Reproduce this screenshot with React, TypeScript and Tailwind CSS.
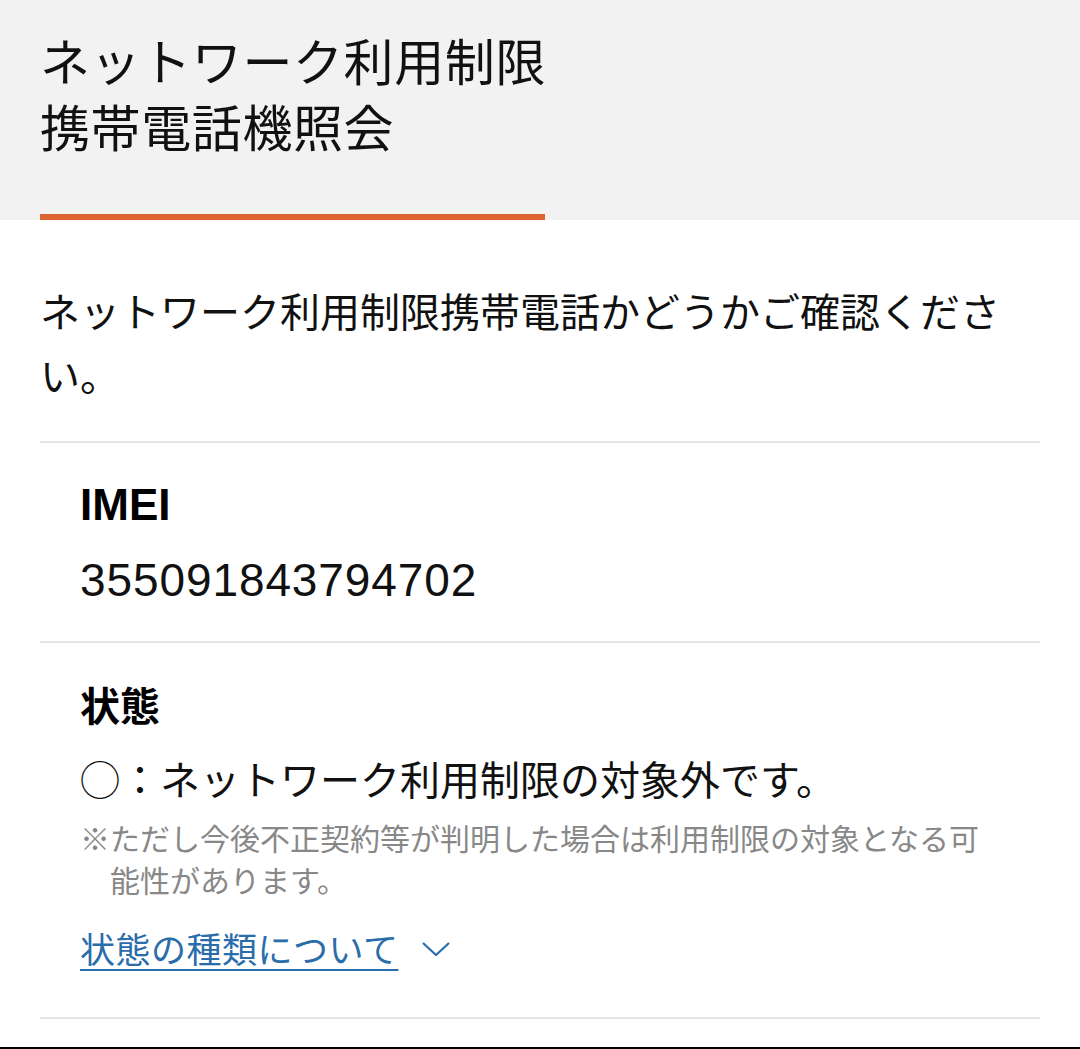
import React from "react";

const jp = { fontFamily: '"Noto Sans CJK JP", "Noto Sans", sans-serif' };

export default function App() {
  return (
    <div className="w-[1080px] h-[1049px] bg-white text-black overflow-hidden flex flex-col" style={jp}>
      <header className="bg-[#f2f2f2] px-[40px] pt-[26px] flex flex-col">
        <h1 className="text-[50px] leading-[66px] font-normal text-[#111] tracking-[0.6px]">
          ネットワーク利用制限
          <br />
          携帯電話機照会
        </h1>
        <div className="mt-[56px] h-[6px] w-[505px] bg-[#dd6330]" />
      </header>

      <main className="px-[40px] flex flex-col">
        <p className="mt-[58px] text-[40px] leading-[64px] text-[#111]">
          ネットワーク利用制限携帯電話かどうかご確認ください。
        </p>
        <div className="mt-[35px] h-[2px] bg-[#e6e6e6]" />

        <section className="px-[40px] pt-[32px] pb-[31px] flex flex-col gap-[15px]">
          <div
            className="text-[44px] leading-[60px] font-bold"
            style={{ fontFamily: '"Liberation Sans", Arial, sans-serif' }}
          >
            IMEI
          </div>
          <div
            className="text-[46px] leading-[60px] text-[#111] tracking-[0.9px]"
            style={{ fontFamily: '"Liberation Sans", Arial, sans-serif' }}
          >
            355091843794702
          </div>
        </section>
        <div className="h-[2px] bg-[#e6e6e6]" />

        <section className="px-[40px] pt-[33px] flex flex-col">
          <div className="text-[40px] leading-[56px] font-bold">状態</div>
          <div className="mt-[18px] text-[40px] leading-[56px] text-[#111]">◯：ネットワーク利用制限の対象外です。</div>
          <p className="mt-[10px] text-[30px] leading-[42px] text-[#888] pl-[1em] [text-indent:-1em]">
            ※ただし今後不正契約等が判明した場合は利用制限の対象となる可能性があります。
          </p>
          <div className="mt-[23px] flex items-center gap-[24px]">
            <a className="text-[35px] leading-[50px] text-[#2a6dab] underline decoration-[2px] underline-offset-[6px] tracking-[0.5px]">
              状態の種類について
            </a>
            <svg width="28" height="14" viewBox="0 0 28 14" className="mt-[2px]">
              <path d="M1 1 L14 13 L27 1" fill="none" stroke="#2a6dab" strokeWidth="2.2" />
            </svg>
          </div>
        </section>
        <div className="mt-[44px] h-[2px] bg-[#e6e6e6]" />
      </main>
      <div className="flex-1" />
      <div className="h-[2px] bg-black" />
    </div>
  );
}
